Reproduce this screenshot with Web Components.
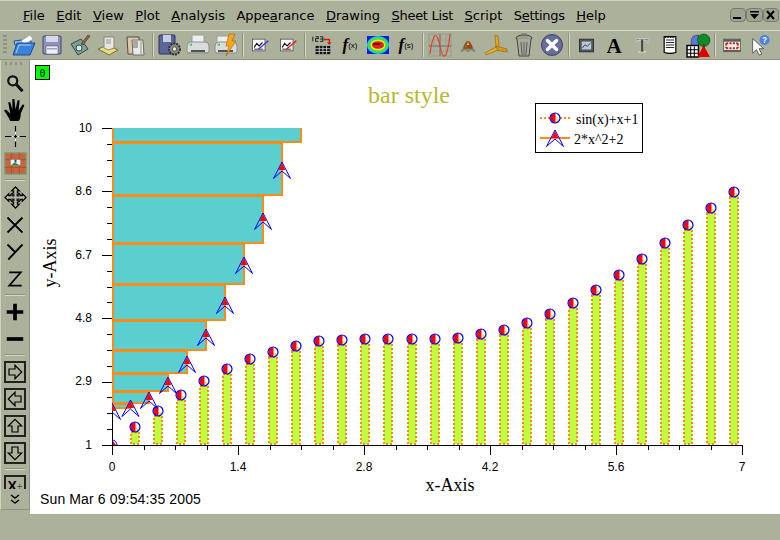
<!DOCTYPE html>
<html>
<head>
<meta charset="utf-8">
<title>bar style</title>
<style>
  html, body { margin: 0; padding: 0; background: #acb19b; }
  body { width: 780px; height: 540px; overflow: hidden; }
</style>
</head>
<body>
<app-window></app-window>
<script>
// toolbar icons, all on a 24x24 box
const ICONS = {
  open: '<path d="M2 8l8-1 1 2 8-1v4H3z" fill="#9cc4ee" stroke="#234a90"/><path d="M9 8l9-6 3 4-9 6z" fill="#fff" stroke="#8a96a8" stroke-width=".6"/><path d="M1 22l4-12h18l-5 12z" fill="#3b82dc" stroke="#1c4a9c"/><path d="M4 20l3-8h12" fill="none" stroke="#a8d0f8"/>',
  save: '<rect x="3" y="3" width="18" height="18" rx="1" fill="#8c92b8" stroke="#40456c"/><rect x="6" y="3" width="12" height="6" fill="#d4d8e8"/><rect x="6" y="13" width="12" height="8" fill="#f0f0f4" stroke="#5a5f80" stroke-width=".6"/><rect x="7" y="15" width="10" height="1.5" fill="#a0a4c0"/>',
  edit: '<path d="M3 11l10-5 7 10-10 6z" fill="#7aa098" stroke="#34504c"/><circle cx="11" cy="15" r="3" fill="#d8e4e0" stroke="#34504c"/><path d="M13 11l7-9 2 1-7 9z" fill="#8a6a3c" stroke="#4a3416" stroke-width=".6"/>',
  note: '<path d="M2 16l10-4 10 5-9 5z" fill="#e8dc78" stroke="#77703a"/><path d="M8 4h10v11l-6 2-4-2z" fill="#e6e6e0" stroke="#8a8a80"/><rect x="10" y="6" width="5" height="5" fill="#c0c0ba"/>',
  copies: '<path d="M3 4h12l1 17H4z" fill="#d8c8ac" stroke="#5a4a38"/><path d="M8 7h11l1 15H9z" fill="#e8e8e4" stroke="#6a6a62"/><rect x="9" y="6" width="5" height="9" fill="#a8a8a0"/><path d="M17 8v13" stroke="#9a8a78"/>',
  floppyGear: '<rect x="1" y="2" width="16" height="19" rx="1" fill="#5c6498" stroke="#2c3060"/><rect x="5" y="2" width="8" height="7" fill="#c8cce0"/><circle cx="16.5" cy="16" r="5.5" fill="#8a8a80" stroke="#303030" stroke-width="2" stroke-dasharray="2 1"/><circle cx="16.5" cy="16" r="2.2" fill="#e4e4dc" stroke="#303030" stroke-width=".7"/>',
  printer: '<rect x="6" y="2" width="12" height="8" fill="#eceff0" stroke="#9aa09c"/><path d="M1 13q0-4 4-4h14q4 0 4 4v5q0 2-2 2H3q-2 0-2-2z" fill="#d8dcdc" stroke="#8a908c"/><path d="M2 19h20v2H2z" fill="#9aa09c"/><rect x="5" y="17" width="14" height="2" fill="#50544f"/><path d="M3 12l3-2v3z" fill="#5cc060"/>',
  printerFlash: '<rect x="3" y="3" width="12" height="8" fill="#eceff0" stroke="#9aa09c"/><path d="M1 13q0-4 4-4h14q4 0 4 4v5q0 2-2 2H3q-2 0-2-2z" fill="#d8dcdc" stroke="#8a908c"/><rect x="4" y="17" width="15" height="2" fill="#50544f"/><path d="M3 12l3-2v3z" fill="#5cc060"/><path d="M15 1h6l-3 7h4L12 23l3-10h-3z" fill="#f6a818" stroke="#a86008" stroke-width=".6"/>',
  graphBlue: '<rect x="3" y="5" width="15" height="14" fill="#fff" stroke="#555"/><path d="M5 15l3-5 3 3 4-4" fill="none" stroke="#111" stroke-width="1.4"/><path d="M5 17h11" stroke="#111"/><path d="M10 17L22 7" stroke="#3434e0" stroke-width="1.6"/>',
  graphRed: '<rect x="3" y="5" width="15" height="14" fill="#fff" stroke="#555"/><path d="M5 15l3-5 3 3 4-4" fill="none" stroke="#111" stroke-width="1.4"/><path d="M5 17h11" stroke="#111"/><path d="M10 17L22 7" stroke="#e01818" stroke-width="1.6"/>',
  table123: '<rect x="5" y="13" width="16" height="9" fill="#111"/><path d="M5 16h16M5 19h16M9 13v9M13 13v9M17 13v9" stroke="#fff" stroke-width=".7"/><path d="M2 3v5M5 3h3v2H5v3h3M10 3h3v5h-3M10 5.500h3" fill="none" stroke="#111" stroke-width="1"/><path d="M14 6h6v3" fill="none" stroke="#e01010" stroke-width="1.500"/><path d="M17.500 9h5L20 12z" fill="#e01010"/>',
  heatmap: '<rect x="1" y="3" width="22" height="18" fill="#1818e0"/><ellipse cx="12" cy="12" rx="11" ry="9" fill="#18d0d0"/><ellipse cx="12" cy="12" rx="9.500" ry="7.500" fill="#40e040"/><ellipse cx="12" cy="12" rx="7.500" ry="5.500" fill="#e8e820"/><ellipse cx="12" cy="12" rx="6" ry="3.800" fill="#e02020"/><path d="M7 11h7" stroke="#800" stroke-width="2"/>',
  sine: '<rect x="1" y="1" width="22" height="22" fill="none" stroke="#9a9c8c"/><path d="M1 13h22M12 1v22" stroke="#666"/><path d="M1 18h22M1 7h22M6 1v22M18 1v22" stroke="#9a9c8c" stroke-width=".7"/><path d="M2 21C5 -2 9 -2 12 13S19 28 22 1" fill="none" stroke="#e04030" stroke-width="1.200"/>',
  surface: '<path d="M3 21L10 7h4l7 14-5-3-4 3-4-3z" fill="#7c9a70" stroke="#4a5a44" stroke-width=".6"/><path d="M7 12q5-9 10 0l1 5H6z" fill="#a83c20"/><path d="M10 12l2-4 2 4z" fill="#e8c020"/><circle cx="9" cy="14" r="1.500" fill="#40a040"/>',
  propeller: '<path d="M11 2l3 1 1 10-3 2z" fill="#e0a818" stroke="#8a6010" stroke-width=".6"/><path d="M12 13l11 3 0 3-12-2z" fill="#d89818" stroke="#8a6010" stroke-width=".6"/><path d="M12 14L1 20l1 2 12-5z" fill="#e8b020" stroke="#8a6010" stroke-width=".6"/>',
  trash: '<ellipse cx="12" cy="5" rx="8" ry="3" fill="#9a9c90" stroke="#44463e"/><path d="M5 6l2 17h10l2-17" fill="#a8aaa0" stroke="#44463e"/><path d="M9 9l1 13M12 9v13M15 9l-1 13" stroke="#5c5e54"/><rect x="9" y="0.500" width="6" height="2" fill="#77796f"/>',
  closeCircle: '<circle cx="12" cy="12" r="10.500" fill="#666c9c" stroke="#3c406c"/><path d="M7.500 7.500l9 9M16.500 7.500l-9 9" stroke="#fff" stroke-width="3.400" stroke-linecap="round"/>',
  monitor: '<rect x="3" y="4" width="18" height="16" fill="#50565c" stroke="#222"/><rect x="6" y="7" width="12" height="10" fill="#b8c8d8"/><path d="M7 15l3-4 3 2 4-4" fill="none" stroke="#222"/>',
  bigA: '<text x="12" y="20" text-anchor="middle" font-family="Liberation Serif" font-weight="700" font-size="21" fill="#000">A</text>',
  thinT: '<text x="12" y="19" text-anchor="middle" font-family="Liberation Serif" font-weight="700" font-size="19" fill="#3a3f3a" stroke="#fff" stroke-width=".4">T</text>',
  memo: '<path d="M5 2h14v19q-7 2-14 0z" fill="#fff" stroke="#000" stroke-width="1.400"/><path d="M7 6h10M7 9h10M7 12h10M7 15h10" stroke="#000"/><path d="M6 2.500h12" stroke="#000" stroke-dasharray="1 1" stroke-width="2"/>',
  colourful: '<path d="M5 14V8q0-6 7-6v12z" fill="#5a78d8" stroke="#22346c" stroke-width=".6"/><rect x="1" y="12" width="11" height="11" fill="#fff" stroke="#000" stroke-width="1.400"/><path d="M4.500 13v10M8 13v10M1 16h11M1 19.500h11" stroke="#000"/><circle cx="17" cy="7" r="6" fill="#128a28" stroke="#0a4a14" stroke-width=".6"/><rect x="16" y="11" width="2" height="5" fill="#5a3010"/><path d="M17 12l6 11H11z" fill="#e00000"/>',
  frame: '<rect x="2" y="5" width="20" height="15" fill="#eee" stroke="#555"/><rect x="2" y="5" width="20" height="3" fill="#5c5c5c"/><rect x="2" y="18" width="20" height="2" fill="#5c5c5c"/><path d="M5 10h14M5 16h14M5 10v6M19 10v6" stroke="#b03020" stroke-width="2.400" stroke-dasharray="2.500 1.500"/>',
  help: '<path d="M4 5v16l4-4 3 6 3-1-3-6h5z" fill="#fff" stroke="#555"/><circle cx="17" cy="6.500" r="5.500" fill="#4a80e8"/><text x="17" y="10" text-anchor="middle" font-family="Liberation Sans" font-weight="700" font-size="9" fill="#fff">?</text>',
  magnifier: '<circle cx="9" cy="9" r="6" fill="#b8bca8" stroke="#111" stroke-width="3"/><path d="M13 13l9 10" stroke="#111" stroke-width="4"/>',
  hand: '<path d="M7 23Q4 17 1 13l2-1 4 4L5 5h2l2 7V2h2l1 10 2-9h2l-1 10 4-6 1.500 1L17 16q0 5-2 7z" fill="#000"/>',
  cross: '<path d="M12 1v6M12 10v4M12 17v6M1 12h7M10 12h4M16 12h7" stroke="#000" stroke-width="1.200"/><path d="M12 7v3M12 14v3M8 12h2M14 12h2" stroke="#fff" stroke-width="1"/>',
  picture: '<rect x="1" y="1" width="22" height="22" fill="#c8643c"/><rect x="1" y="1" width="22" height="22" fill="none" stroke="#7c9a70" stroke-width="1.500"/><path d="M1 8h22M1 16h22M8 1v22M16 1v22" stroke="#8a5034" stroke-width=".7"/><rect x="7" y="8" width="10" height="6" fill="#e8f0f8"/><path d="M7 14l4-3 6 3z" fill="#3a8a30"/><rect x="11" y="8" width="2" height="3" fill="#204890"/>',
  move: '<path d="M12 1l4 4h-2v2q3 1 3 3h2V8l4 4-4 4v-2h-2q0 2-3 3v2h2l-4 4-4-4h2v-2q-3-1-3-3H5v2l-4-4 4-4v2h2q0-2 3-3V5H8z" fill="#b4b8a4" stroke="#000" stroke-width="1.300"/><rect x="8" y="8" width="3" height="3" fill="#222"/><rect x="13" y="8" width="3" height="3" fill="#222"/><rect x="8" y="13" width="3" height="3" fill="#222"/><rect x="13" y="13" width="3" height="3" fill="#222"/>',
  letterX: '<path d="M4 2l18 18M22 2L4 20" stroke="#fff" stroke-width=".6"/><path d="M3 3l18 18M21 3L3 21" stroke="#000" stroke-width="2.200"/>',
  letterY: '<path d="M3 3l9 9M21 3L4 21" stroke="#000" stroke-width="2.200"/>',
  letterZ: '<path d="M5 4h14L5 20h15" fill="none" stroke="#000" stroke-width="2"/>',
  plus: '<path d="M12 3v18M3 12h18" stroke="#000" stroke-width="4"/>',
  minus: '<path d="M3 12h18" stroke="#000" stroke-width="4"/>',
  right: '<path d="M4 8h8V3l9 9-9 9v-5H4z" fill="none" stroke="#000" stroke-width="1.600"/>',
  left: '<path d="M20 8h-8V3l-9 9 9 9v-5h8z" fill="none" stroke="#000" stroke-width="1.600"/>',
  up: '<path d="M8 20v-8H3l9-9 9 9h-5v8z" fill="none" stroke="#000" stroke-width="1.600"/>',
  down: '<path d="M8 4v8H3l9 9 9-9h-5V4z" fill="none" stroke="#000" stroke-width="1.600"/>'
};

const svgIcon = (name, size) => `<svg width="${size}" height="${size}" viewBox="0 0 24 24">${ICONS[name]}</svg>`;

class AppWindow extends HTMLElement {
  constructor() {
    super();
    this.attachShadow({ mode: 'open' });
  }

  connectedCallback() {
    this.shadowRoot.innerHTML = `
      <style>
        :host { display: flex; flex-direction: column; width: 780px; height: 540px; background: #acb19b; overflow: hidden; }
        .work { display: flex; height: 454px; }
      </style>
      <menu-bar></menu-bar>
      <main-toolbar></main-toolbar>
      <div class="work">
        <side-toolbar></side-toolbar>
        <plot-canvas></plot-canvas>
      </div>
    `;
  }
}

class MenuBar extends HTMLElement {
  constructor() {
    super();
    this.attachShadow({ mode: 'open' });
  }

  connectedCallback() {
    this.shadowRoot.innerHTML = `
      <style>
        :host { display: flex; align-items: center; box-sizing: border-box; height: 31px; padding: 0 0 1px 23px;
          border-top: 1px solid #cfd3bf; border-bottom: 1px solid #d4d7c6;
          font: 13px "DejaVu Sans", sans-serif; color: #000; }
        nav { display: flex; gap: 11.500px; flex: 1; white-space: nowrap; }
        .tight { letter-spacing: -.3px; }
        .ctl { display: flex; flex: none; margin-right: 1px; }
        .ctl span { box-sizing: border-box; width: 16.500px; height: 14px; background: #9fa391; border: 1px solid #777b6c; border-radius: 4px; display: flex; align-items: center; justify-content: center; }
        svg { display: block; }
      </style>
      <nav>
        <span><u>F</u>ile</span><span><u>E</u>dit</span><span><u>V</u>iew</span><span><u>P</u>lot</span>
        <span><u>A</u>nalysis</span><span>Appe<u>a</u>rance</span><span><u>D</u>rawing</span><span class="tight"><u>S</u>heet List</span>
        <span><u>S</u>cript</span><span class="tight">S<u>e</u>ttings</span><span><u>H</u>elp</span>
      </nav>
      <div class="ctl">
        <span><svg width="11" height="10"><path d="M1 8h8" stroke="#000" stroke-width="2"/></svg></span>
        <span><svg width="11" height="10"><path d="M1 1h9v1.500H1zM1 4h9L5.500 9z" fill="#000"/></svg></span>
        <span><svg width="11" height="10"><path d="M2 1l7 8M9 1l-7 8" stroke="#000" stroke-width="2"/></svg></span>
      </div>
    `;
  }
}

class MainToolbar extends HTMLElement {
  constructor() {
    super();
    this.attachShadow({ mode: 'open' });
  }

  connectedCallback() {
    const groups = [
      ['open', 'save', 'edit', 'note', 'copies'],
      ['floppyGear', 'printer', 'printerFlash'],
      ['graphBlue', 'graphRed'],
      ['table123', 'fx', 'heatmap', 'fx2'],
      ['sine', 'surface', 'propeller', 'trash', 'closeCircle'],
      ['monitor', 'bigA', 'thinT', 'memo', 'colourful'],
      ['frame', 'help']
    ];
    const sizes = { graphBlue: 20, graphRed: 20, table123: 22, surface: 18, monitor: 19, memo: 20, frame: 20, help: 22, colourful: 25 };
    const btn = (n) => {
      if (n === 'fx' || n === 'fx2') {
        return `<span class="b fx"><b>f</b><small>(${n === 'fx' ? 'x' : 's'})</small></span>`;
      }
      return `<span class="b">${svgIcon(n, sizes[n] || 24)}</span>`;
    };
    const html = groups.map(g => g.map(btn).join('')).join('<i></i>');
    this.shadowRoot.innerHTML = `
      <style>
        :host { display: flex; align-items: center; box-sizing: border-box; height: 29px; padding-left: 10px;
          border-bottom: 1px solid #8f9380; }
        .grip { position: absolute; left: 3px; top: 35px; width: 4px; height: 20px;
          background: repeating-linear-gradient(#8e927f 0 2px, transparent 2px 4px); }
        .b { width: 28px; height: 26px; display: flex; align-items: center; justify-content: center; flex: none; }
        i { width: 2px; height: 24px; margin: 0 2px; background: #d4d7c6; border-left: 1px solid #8f9380; box-sizing: border-box; flex: none; }
        svg { display: block; }
        .fx { font-family: "Liberation Serif", serif; color: #000; }
        .fx b { font-size: 17px; font-style: italic; }
        .fx small { font: 8px "Liberation Sans", sans-serif; }
      </style>
      <div class="grip"></div>
      ${html}
    `;
  }
}

class SideToolbar extends HTMLElement {
  constructor() {
    super();
    this.attachShadow({ mode: 'open' });
  }

  connectedCallback() {
    const row = (n, sz) => `<span class="b">${svgIcon(n, sz || 23)}</span>`;
    const box = (n) => `<span class="b"><span class="box">${svgIcon(n, 18)}</span></span>`;
    this.shadowRoot.innerHTML = `
      <style>
        :host { display: flex; flex-direction: column; align-items: center; position: relative; box-sizing: border-box;
          width: 30px; height: 450px; padding: 9px 0 0 0; overflow: hidden;
          border-right: 1px solid #8f9380; border-bottom: 1px solid #8f9380; border-left: 1px solid #cfd3bf; }
        .grip { position: absolute; left: 4px; top: 2px; width: 20px; height: 3px;
          background: repeating-linear-gradient(90deg, #8e927f 0 2px, transparent 2px 5px); }
        .b { height: 27px; width: 28px; flex: none; display: flex; align-items: center; justify-content: center; }
        .box { box-sizing: border-box; width: 22px; height: 22px; border: 2px solid #222; display: flex; align-items: center; justify-content: center; }
        hr { width: 20px; height: 2px; margin: 2px 0; border: 0; background: #d4d7c6; border-top: 1px solid #8f9380; box-sizing: border-box; flex: none; }
        hr.first { margin-bottom: 3px; }
        svg { display: block; }
        .more { position: absolute; left: 0; right: 0; bottom: 0; height: 20px; background: #acb19b; display: flex; align-items: center; justify-content: center; }
        .clip { height: 24px; align-items: flex-start; padding-top: 3px; }
        .xp { font: 700 14px "Liberation Sans", sans-serif; color: #000; }
        .xp em { font-style: normal; font-weight: 400; font-size: 10px; color: #555; }
      </style>
      <div class="grip"></div>
      ${row('magnifier', 18)}${row('hand', 25)}${row('cross')}${row('picture')}
      <hr class="first">
      ${row('move')}${row('letterX', 20)}${row('letterY', 20)}${row('letterZ', 20)}
      <hr>
      ${row('plus', 22)}${row('minus', 22)}
      <hr>
      ${box('right')}${box('left')}${box('up')}${box('down')}
      <hr>
      <span class="b clip"><span class="box xp">X<em>+</em></span></span>
      <div class="more"><svg width="12" height="12"><path d="M2 2l4 3 4-3M2 7l4 3 4-3" fill="none" stroke="#000" stroke-width="1.500"/></svg></div>
    `;
  }
}

class PlotCanvas extends HTMLElement {
  constructor() {
    super();
    this.attachShadow({ mode: 'open' });
  }

  connectedCallback() {
    // drawing coordinates are window pixels, the svg sits at 30,60
    const X0 = 112, Y0 = 445, ORANGE = '#ff8a14';
    // sin(x)+x+1 read off the picture, one y per point
    const S1 = [427,411,395,381,369,359,352,346,341,340,339,339,339,339,338,334,330,323,314,303,290,275,259,243,225,208,192];

    // cyan horizontal bars: top, bottom, right edge
    const hbars = [[126,142,301],[143,195,282],[196,243,263],[244,284,244],[285,320,225],
      [321,350,206],[351,373,187],[374,391,168],[392,403,149],[404,408,130]];
    let grid = '';
    hbars.forEach(([t, b, r]) => {
      grid += `<rect x="${X0 + 1}" y="${t}" width="${r - X0 - 1}" height="${b - t}" fill="#59cfcf" stroke="${ORANGE}" stroke-width="2"/>`;
    });
    grid = `<clipPath id="h"><rect x="${X0}" y="128" width="640" height="300"/></clipPath><g clip-path="url(#h)">${grid}</g>`;

    // lime vertical bars with the dotted outline
    S1.forEach((y, i) => {
      const x = Math.round(X0 + (i + 1) * 23.04);
      grid += `<rect x="${x - 4}" y="${y + 5}" width="8" height="${Y0 - y - 6}" fill="#c0ff3e" stroke="${ORANGE}" stroke-width="2" stroke-dasharray="2 2"/>`;
    });

    // circle markers, red on the left half
    const circle = (x, y) => `<g transform="translate(${x} ${y})"><circle r="5" fill="#fff"/><path d="M.5-5A5 5 0 0 0 .5 5z" fill="#f00"/><path d="M1 1h3.800A5 5 0 0 1 1 4.800z" fill="#e6e66a"/><circle r="5" fill="none" stroke="#00f" stroke-width="1.200"/></g>`;
    let marks = '';
    S1.forEach((y, i) => {
      marks += circle(Math.round(X0 + (i + 1) * 23.04), y);
    });

    // arrowhead markers of the second series: x, apex y
    const tri = (x, y) => `<path d="M${x} ${y}l-8.500 16.500L${x} ${y + 9}l8.500 7.500z" fill="none" stroke="#00f" stroke-width="1"/><path d="M${x} ${y + 1}l-3.500 7h7z" fill="#f00"/>`;
    [[130.5,400],[149,392],[168,377],[187,356],[206,329],[225,297],[244,257],[263,213],[282,162]].forEach(p => {
      marks += tri(p[0], p[1]);
    });

    // points on the y axis are cut off by the frame
    const clipped = `<clipPath id="c"><rect x="${X0}" y="120" width="640" height="325"/></clipPath>
      <g clip-path="url(#c)">${tri(112, 403)}<circle cx="112" cy="445" r="5" fill="none" stroke="#00f"/><path d="M113 441l3 4h-3z" fill="#f00"/></g>`;

    // axes, under the bars
    let axes = `<path d="M${X0 + .5} 128V${Y0 + 1}M${X0} ${Y0 + .5}H743" stroke="#000" fill="none"/>`;
    for (let k = 0; k <= 20; k++) {
      const y = Math.round(445 - k * 317 / 20) + .5;
      axes += `<path d="M${k % 4 ? 107 : 102} ${y}H112" stroke="#000"/>`;
    }
    for (let k = 0; k <= 20; k++) {
      const x = Math.round(112 + k * 31.5) + .5;
      axes += `<path d="M${x} 445V${k % 4 ? 450 : 455}" stroke="#000"/>`;
    }

    let labels = '';
    [['10',128],['8.6',191],['6.7',255],['4.8',318],['2.9',381],['1',445]].forEach(([t, y]) => {
      labels += `<text class="n" x="92" y="${y + 4}" text-anchor="end">${t}</text>`;
    });
    [['0',112],['1.4',238],['2.8',364],['4.2',490],['5.6',616],['7',742]].forEach(([t, x]) => {
      labels += `<text class="n" x="${x}" y="471" text-anchor="middle">${t}</text>`;
    });

    this.shadowRoot.innerHTML = `
      <style>
        :host { display: block; flex: 1; height: 454px; background: #fff; overflow: hidden; }
        svg { display: block; }
        text { font-family: "Liberation Serif", serif; }
        .n { font: 12px "Liberation Sans", sans-serif; fill: #000; }
        .leg { font-size: 14px; fill: #000; }
        .ax { font-size: 18px; fill: #000; }
        .date { font: 14px "Liberation Sans", sans-serif; letter-spacing: .13px; fill: #000; }
      </style>
      <svg width="750" height="454" viewBox="30 60 750 454">
        <rect x="35.500" y="65.500" width="14" height="14" fill="#0f0" stroke="#000"/>
        <text x="42.500" y="76.500" text-anchor="middle" style="font:10px 'DejaVu Sans Mono',monospace">0</text>
        <text x="409" y="103" text-anchor="middle" font-size="24" fill="#b8b832">bar style</text>
        ${axes}${grid}${marks}${clipped}${labels}
        <rect x="535.500" y="103.500" width="107" height="49" fill="#fff" stroke="#000"/>
        <path d="M540 118h30" stroke="${ORANGE}" stroke-width="2" stroke-dasharray="2 2"/>
        ${circle(555, 118)}
        <path d="M540 138h30" stroke="${ORANGE}" stroke-width="2"/>
        ${tri(555, 130)}
        <text class="leg" x="576" y="124">sin(x)+x+1</text>
        <text class="leg" x="574" y="144">2*x^2+2</text>
        <text class="ax" x="450" y="491" text-anchor="middle">x-Axis</text>
        <text class="ax" transform="translate(56 263) rotate(-90)" text-anchor="middle">y-Axis</text>
        <text class="date" x="40" y="504">Sun Mar 6 09:54:35 2005</text>
      </svg>
    `;
  }
}

customElements.define('app-window', AppWindow);
customElements.define('menu-bar', MenuBar);
customElements.define('main-toolbar', MainToolbar);
customElements.define('side-toolbar', SideToolbar);
customElements.define('plot-canvas', PlotCanvas);
</script>
</body>
</html>
